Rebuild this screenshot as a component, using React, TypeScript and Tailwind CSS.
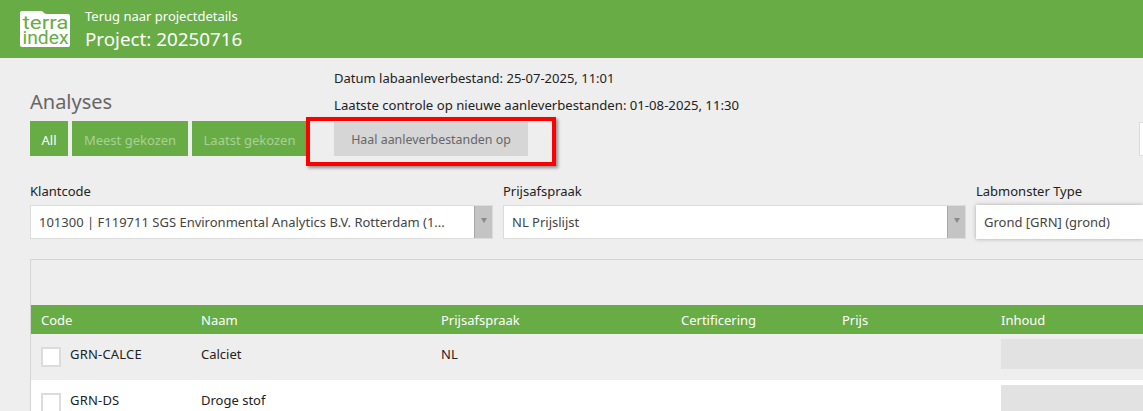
const font = "font-['Segoe_UI','Noto_Sans','Open_Sans',sans-serif]";

function Logo() {
  return (
    <svg width="52" height="38" viewBox="0 0 52 38" className="shrink-0">
      <path d="M1 3 Q1 1 3 1 H22 Q24 1 25 3 Q26 4 28 4 H49 Q51 4 51 6 V35 Q51 37 49 37 H3 Q1 37 1 35 Z" fill="#fff" />
      <text x="3.5" y="19" fontSize="19" fontFamily="Roboto, sans-serif" fill="#68ac46" textLength="46" lengthAdjust="spacingAndGlyphs">terra</text>
      <text x="3.5" y="33.5" fontSize="19" fontFamily="Roboto, sans-serif" fill="#68ac46" textLength="46" lengthAdjust="spacingAndGlyphs">index</text>
    </svg>
  );
}

function Select({ value, className }: { value: string; className: string }) {
  return (
    <div className={`h-[34px] flex bg-white border border-[#dcdcdc] ${className}`}>
      <div className="flex-1 min-w-0 pl-[8px] flex items-center text-[#444444] whitespace-nowrap overflow-hidden">{value}</div>
      <div className="w-[18px] bg-[#c4c4c4] border-l border-[#a8a8a8] flex items-center justify-center pb-[3px]">
        <div className="w-0 h-0 border-x-[3.5px] border-x-transparent border-t-[5px] border-t-[#8a8a8a]" />
      </div>
    </div>
  );
}

function Row({ code, name, deal, bg }: { code: string; name: string; deal: string; bg: string }) {
  return (
    <div className={`h-[46px] shrink-0 flex items-start ${bg} text-[#222222]`}>
      <div className="w-[170px] pl-[10px] h-full flex items-center gap-[9px] shrink-0">
        <div className="w-[20px] h-[20px] bg-white border-2 border-[#dcdcdc] shrink-0" />
        <span className="pb-[6px] tracking-[0.2px]">{code}</span>
      </div>
      <div className="w-[240px] h-full flex items-center pb-[6px] shrink-0">{name}</div>
      <div className="w-[560px] h-full flex items-center pb-[6px] shrink-0">{deal}</div>
      <div className="flex-1 h-[30px] mt-[5px] bg-[#e2e2e2]" />
    </div>
  );
}

export default function App() {
  return (
    <div className={`w-[1143px] h-[411px] overflow-hidden bg-[#eeeeee] text-[13px] leading-[18px] text-[#222222] flex flex-col ${font}`}>
      <header className="h-[58px] shrink-0 bg-[#68ac46] text-white flex items-center pl-[19px] gap-[14px]">
        <Logo />
        <div className="flex flex-col">
          <span className="text-[13px] leading-[18px]">Terug naar projectdetails</span>
          <span className="text-[18.8px] leading-[26px] mt-[1px]">Project: 20250716</span>
        </div>
      </header>

      <div className="h-[98px] shrink-0 flex pl-[30px]">
        <div className="w-[304px] shrink-0 flex flex-col justify-end">
          <h2 className="text-[20px] leading-[28px] text-[#666666] mb-[5px]">Analyses</h2>
          <div className="flex gap-[4px]">
            <div className="h-[35px] w-[38px] pt-[2px] bg-[#68ac46] text-white flex items-center justify-center">All</div>
            <div className="h-[35px] w-[116px] pt-[2px] bg-[#68ac46] text-[#a9d196] flex items-center justify-center whitespace-nowrap">Meest gekozen</div>
            <div className="h-[35px] w-[115px] pt-[2px] bg-[#68ac46] text-[#a9d196] flex items-center justify-center whitespace-nowrap">Laatst gekozen</div>
          </div>
        </div>
        <div className="flex flex-col items-start">
          <p className="mt-[11px] h-[18px] whitespace-nowrap">Datum labaanleverbestand: 25-07-2025, 11:01</p>
          <p className="mt-[9px] h-[18px] text-[13.15px] whitespace-nowrap">Laatste controle op nieuwe aanleverbestanden: 01-08-2025, 11:30</p>
          <div className="relative mt-[8px]">
            <div className="h-[34px] w-[194px] pt-[1px] bg-[#d6d6d6] text-[12.4px] text-[#666666] flex items-center justify-center whitespace-nowrap">Haal aanleverbestanden op</div>
            <div className="absolute left-[-28px] top-[-5px] w-[250px] h-[49px] border-[4px] border-[#ff0000] shadow-[2px_2px_3px_rgba(0,0,0,0.4)]" />
          </div>
        </div>
        <div className="ml-auto self-end h-[34px] w-[4px] bg-white border border-[#dcdcdc] border-r-0" />
      </div>

      <div className="flex pl-[30px] gap-[10px] mt-[26px] shrink-0">
        <div className="w-[463px] shrink-0">
          <label className="block h-[23px]">Klantcode</label>
          <Select className="w-full" value="101300 | F119711 SGS Environmental Analytics B.V. Rotterdam (1..." />
        </div>
        <div className="w-[463px] shrink-0">
          <label className="block h-[23px]">Prijsafspraak</label>
          <Select className="w-full" value="NL Prijslijst" />
        </div>
        <div className="flex-1 min-w-0">
          <label className="block h-[23px]">Labmonster Type</label>
          <div className="h-[34px] bg-white flex items-center pl-[8px] text-[#444444] shadow-[0_0_4px_rgba(0,0,0,0.3)]">Grond [GRN] (grond)</div>
        </div>
      </div>

      <div className="ml-[30px] mt-[20px] border-l border-t border-[#d4d4d4] flex-1 flex flex-col min-h-0">
        <div className="h-[45px] shrink-0" />
        <div className="h-[29px] shrink-0 bg-[#68ac46] text-white flex items-center">
          <span className="w-[170px] pl-[10px] shrink-0">Code</span>
          <span className="w-[240px] shrink-0">Naam</span>
          <span className="w-[240px] shrink-0">Prijsafspraak</span>
          <span className="w-[161px] shrink-0">Certificering</span>
          <span className="w-[159px] shrink-0">Prijs</span>
          <span>Inhoud</span>
        </div>
        <Row code="GRN-CALCE" name="Calciet" deal="NL" bg="bg-[#eeeeee]" />
        <Row code="GRN-DS" name="Droge stof" deal="" bg="bg-white" />
      </div>
    </div>
  );
}
